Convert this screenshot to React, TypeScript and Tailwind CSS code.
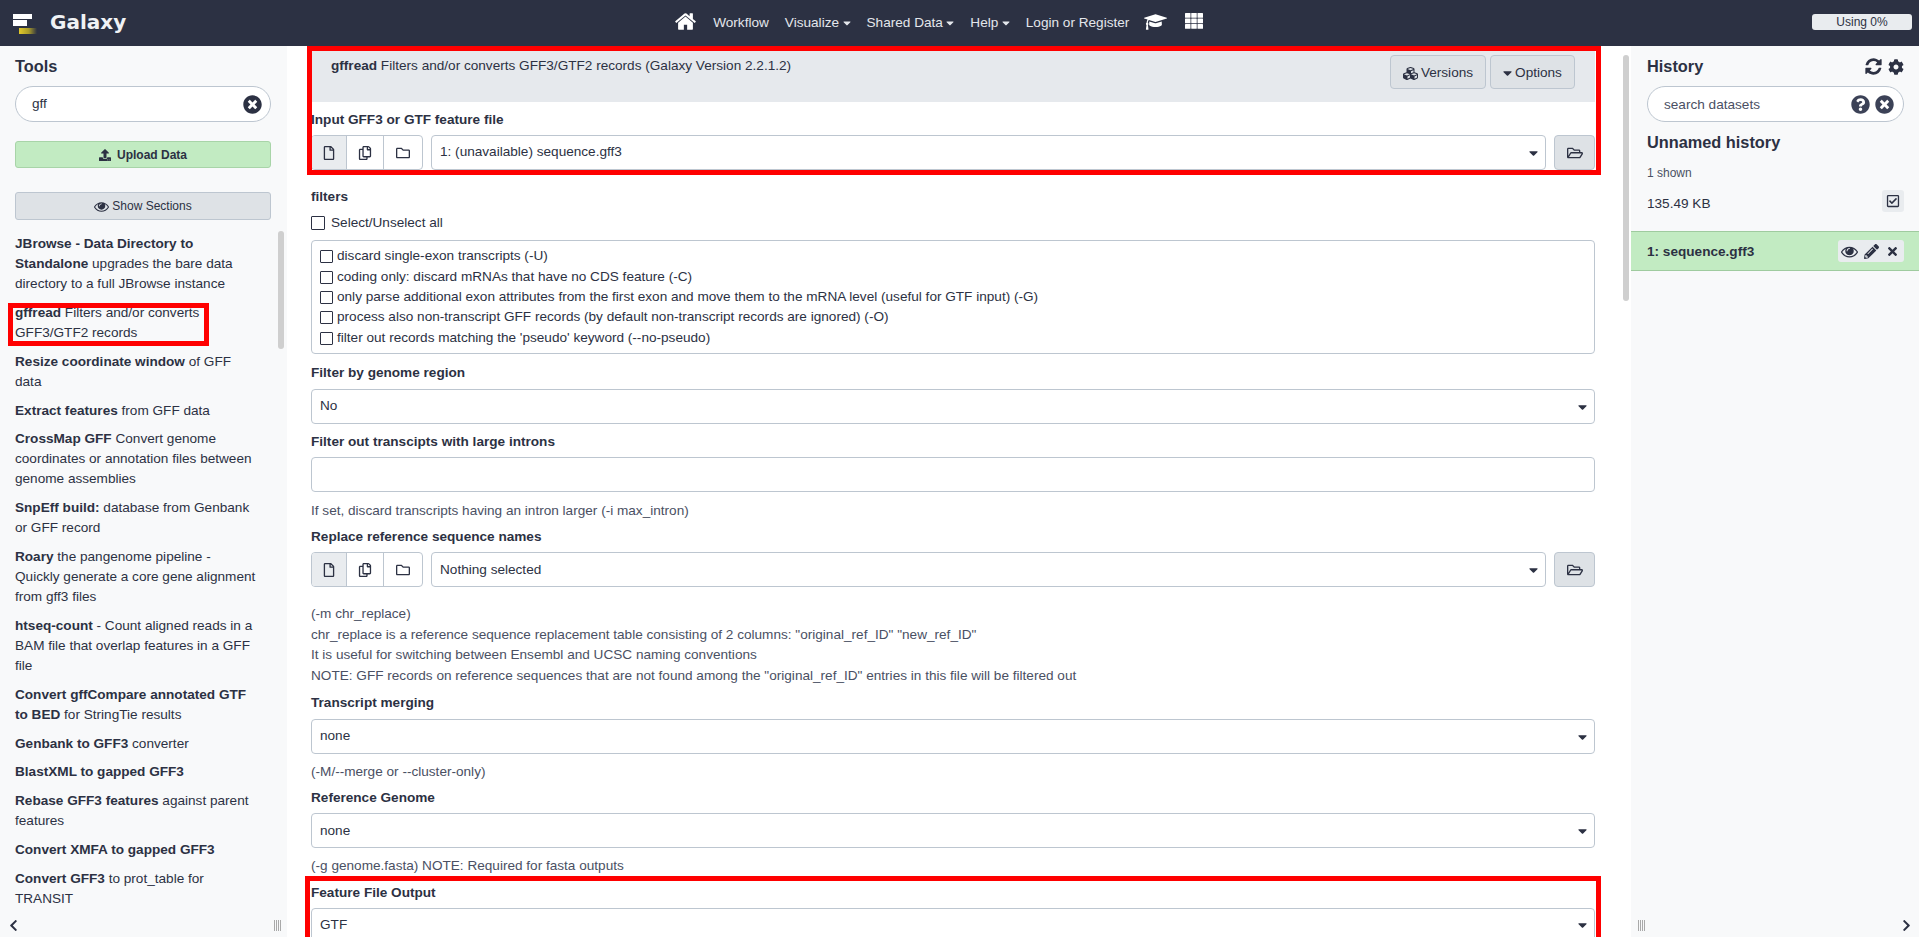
import React from "react";
import {
  FaTimesCircle, FaQuestionCircle, FaCog, FaUpload,
  FaRegFile, FaRegCopy, FaRegFolder, FaRegFolderOpen, FaCubes, FaCaretDown, FaPencilAlt, FaTimes,
  FaRegCheckSquare, FaChevronLeft, FaChevronRight,
} from "react-icons/fa";

const font = "font-['Liberation_Sans',Arial,sans-serif]";

function HomeIcon({ className }: { className: string }) {
  return (
    <svg viewBox="0 0 1792 1792" fill="currentColor" className={className}>
      <path d="M1472 992v480q0 26-19 45t-45 19h-384v-384h-256v384h-384q-26 0-45-19t-19-45v-480q0-1 .5-3t.5-3l575-474 575 474q1 2 1 6zm223-69l-62 74q-8 9-21 11h-3q-13 0-21-7l-692-577-692 577q-12 8-24 7-13-2-21-11l-62-74q-8-10-7-23.5t11-21.5l719-599q32-26 76-26t76 26l244 204v-195q0-14 9-23t23-9h192q14 0 23 9t9 23v408l219 182q10 8 11 21.5t-7 23.5z" />
    </svg>
  );
}

function CapIcon({ className }: { className: string }) {
  return (
    <svg viewBox="0 0 2304 1792" fill="currentColor" className={className}>
      <path d="M1774 836l18 316q4 69-82 128t-235 93.5-323 34.5-323-34.5-235-93.5-82-128l18-316 574 181q22 7 48 7t48-7zm530-324q0 23-22 31l-1120 352q-4 1-10 1t-10-1l-652-206q-43 34-71 111.5t-34 178.5q63 36 63 109 0 69-58 107l58 433q2 14-8 25-9 11-24 11h-192q-15 0-24-11-10-11-8-25l58-433q-58-38-58-107 0-73 65-111 11-207 98-330l-333-104q-22-8-22-31t22-31l1120-352q4-1 10-1t10 1l1120 352q22 8 22 31z" />
    </svg>
  );
}

function GridIcon({ className }: { className: string }) {
  return (
    <svg viewBox="0 0 18 16" fill="currentColor" className={className}>
      {[0, 5.5, 11].map((y) =>
        [0, 6.25, 12.5].map((x) => <rect key={`${x}-${y}`} x={x} y={y} width="5.5" height="4.8" rx="0.5" />)
      )}
    </svg>
  );
}

function RefreshIcon({ className }: { className: string }) {
  return (
    <svg viewBox="0 0 1792 1792" fill="currentColor" className={className}>
      <path d="M1639 1056q0 5-1 7-64 268-268 434.5t-478 166.5q-146 0-282.5-55t-243.5-157l-129 129q-19 19-45 19t-45-19-19-45v-448q0-26 19-45t45-19h448q26 0 45 19t19 45-19 45l-137 137q71 66 161 102t187 36q134 0 250-65t186-179q11-17 53-117 8-23 30-23h192q13 0 22.5 9.5t9.5 22.5zm25-800v448q0 26-19 45t-45 19h-448q-26 0-45-19t-19-45 19-45l138-138q-148-137-349-137-134 0-250 65t-186 179q-11 17-53 117-8 23-30 23h-199q-13 0-22.5-9.5t-9.5-22.5v-7q65-268 270-434.5t480-166.5q146 0 284 55.5t245 156.5l130-129q19-19 45-19t45 19 19 45z" />
    </svg>
  );
}

function EyeIcon({ className }: { className: string }) {
  return (
    <svg viewBox="0 0 1792 1792" fill="currentColor" className={className}>
      <path d="M1664 960q-152-236-381-353 61 104 61 225 0 185-131.5 316.5t-316.5 131.5-316.5-131.5-131.5-316.5q0-121 61-225-229 117-381 353 133 205 333.5 326.5t434.5 121.5 434.5-121.5 333.5-326.5zm-720-384q0-20-14-34t-34-14q-125 0-214.5 89.5t-89.5 214.5q0 20 14 34t34 14 34-14 14-34q0-86 61-147t147-61q20 0 34-14t14-34zm848 384q0 34-20 69-140 230-376.5 368.5t-499.5 138.5-499.5-139-376.5-368q-20-35-20-69t20-69q140-229 376.5-368t499.5-139 499.5 139 376.5 368q20 35 20 69z" />
    </svg>
  );
}

function NavItem({ children, caret, className }: { children: React.ReactNode; caret?: boolean; className: string }) {
  return (
    <span className={`flex items-center text-[13.6px] text-[#e4e7ec] whitespace-nowrap ${className}`}>
      {children}
      {caret && <FaCaretDown className="w-[8px] h-[12px] ml-[3.5px]" />}
    </span>
  );
}

function Tool({ b, t }: { b?: string; t?: string }) {
  return (
    <div className="mb-[8.85px] leading-[20px] text-[13.6px] text-[#2c3143]">
      {b && <b className="font-bold">{b}</b>}
      {t}
    </div>
  );
}

function Label({ children, className = "" }: { children: React.ReactNode; className?: string }) {
  return <div className={`text-[13.6px] font-bold leading-[20px] text-[#2c3143] ${className}`}>{children}</div>;
}

function Help({ children, className = "" }: { children: React.ReactNode; className?: string }) {
  return <div className={`text-[13.6px] leading-[20.4px] text-[#4a5063] ${className}`}>{children}</div>;
}

function Select({ value, className = "" }: { value: string; className?: string }) {
  return (
    <div className={`flex items-center justify-between h-[35px] border border-[#bdc6d0] rounded-[4px] bg-white pl-[8px] pr-[7px] text-[13.6px] text-[#2c3143] ${className}`}>
      <span>{value}</span>
      <FaCaretDown className="w-[9px] h-[14px] text-[#2c3143]" />
    </div>
  );
}

function FileSelect({ value }: { value: string }) {
  return (
    <div className="flex h-[35px]">
      <div className="flex w-[112px] h-full border border-[#bdc6d0] rounded-[4px] overflow-hidden text-[#2c3143]">
        <div className="w-[35px] flex items-center justify-center bg-[#e9ecef] border-r border-[#bdc6d0]"><FaRegFile className="text-[14px]" /></div>
        <div className="w-[37px] flex items-center justify-center border-r border-[#bdc6d0]"><FaRegCopy className="text-[14px]" /></div>
        <div className="flex-1 flex items-center justify-center"><FaRegFolder className="text-[14px]" /></div>
      </div>
      <Select value={value} className="flex-1 ml-[8px]" />
      <div className="w-[41px] ml-[8px] flex items-center justify-center bg-[#dee2e6] border border-[#bdc6d0] rounded-[4px] text-[#2c3143]">
        <FaRegFolderOpen className="text-[16px]" />
      </div>
    </div>
  );
}

function Check({ className = "" }: { className?: string }) {
  return <span className={`inline-block border-[1.5px] border-[#2c3143] rounded-[1px] bg-white shrink-0 ${className}`} />;
}

function FilterRow({ text, className = "" }: { text: string; className?: string }) {
  return (
    <div className={`flex items-center h-[20px] text-[13.6px] text-[#2c3143] ${className}`}>
      <Check className="w-[13px] h-[13px] mr-[4px]" />
      <span>{text}</span>
    </div>
  );
}

function Grip() {
  return (
    <span className="flex gap-[1px] h-[11px]">
      <i className="w-[1px] bg-[#a9a9a9]" />
      <i className="w-[1px] bg-[#a9a9a9]" />
      <i className="w-[1px] bg-[#a9a9a9]" />
      <i className="w-[1px] bg-[#a9a9a9]" />
    </span>
  );
}

function Red({ className }: { className: string }) {
  return <div className={`absolute border-[5px] border-[#ff0000] pointer-events-none ${className}`} />;
}

export default function App() {
  return (
    <div className={`${font} relative h-[937px] w-full overflow-hidden flex flex-col bg-white`}>
      <header className="h-[46px] shrink-0 bg-[#2c3143] flex items-center">
        <svg width="26" height="22" viewBox="0 0 26 22" className="ml-[12px] mt-[1px] shrink-0">
          <defs>
            <linearGradient id="gy" x1="0" x2="1">
              <stop offset="0" stopColor="#e2c92a" />
              <stop offset="0.55" stopColor="#a89a2a" />
              <stop offset="1" stopColor="#2c3143" />
            </linearGradient>
          </defs>
          <rect x="1" y="1" width="19" height="5" fill="#fff" />
          <rect x="1" y="7" width="14" height="6" fill="#fff" />
          <rect x="7" y="15" width="18" height="6" fill="url(#gy)" />
        </svg>
        <span className="ml-[12px] font-['DejaVu_Sans',sans-serif] text-[20px] font-bold text-[#f0f2f5] mb-[3px]">Galaxy</span>
        <HomeIcon className="ml-[548px] w-[23px] h-[23px] mb-[4px] text-white" />
        <NavItem className="ml-[16px]">Workflow</NavItem>
        <NavItem caret className="ml-[16px]">Visualize</NavItem>
        <NavItem caret className="ml-[16px]">Shared Data</NavItem>
        <NavItem caret className="ml-[16px]">Help</NavItem>
        <NavItem className="ml-[16px]">Login or Register</NavItem>
        <CapIcon className="ml-[15px] w-[23px] h-[18px] mb-[3px] text-white" />
        <GridIcon className="ml-[18px] w-[18px] h-[16px] mb-[4px] text-white" />
        <div className="ml-auto mr-[7px] mb-[2px] w-[100px] h-[16px] rounded-[3px] bg-[#e9ecef] text-center text-[12px] leading-[16px] text-[#2c3143]">Using 0%</div>
      </header>

      <div className="flex flex-1 min-h-0">
        <aside className="relative w-[287px] shrink-0 bg-[#f8f9fa] pl-[15px] overflow-hidden">
          <div className="text-[16.32px] font-bold leading-[21px] mt-[10px] text-[#2c3143]">Tools</div>
          <div className="mt-[9px] w-[256px] h-[36px] rounded-[18px] border border-[#bdc6d0] bg-white flex items-center justify-between pl-[16px] pr-[8px] text-[13.6px] text-[#2c3143]">
            <span>gff</span>
            <FaTimesCircle className="text-[19px]" />
          </div>
          <div className="mt-[19px] w-[256px] h-[27px] rounded-[3px] border border-[#a8d4a8] bg-[#c2ebc2] flex items-center justify-center text-[12px] font-bold text-[#2c3143]">
            <FaUpload className="text-[12px] mr-[6px]" />Upload Data
          </div>
          <div className="mt-[24px] w-[256px] h-[28px] rounded-[3px] border border-[#bdc6d0] bg-[#dee2e6] flex items-center justify-center text-[12px] text-[#2c3143]">
            <EyeIcon className="w-[15px] h-[15px] mr-[3px]" />Show Sections
          </div>
          <div className="mt-[14px] w-[243px]">
            <Tool b="JBrowse - Data Directory to Standalone" t=" upgrades the bare data directory to a full JBrowse instance" />
            <Tool b="gffread" t=" Filters and/or converts GFF3/GTF2 records" />
            <Tool b="Resize coordinate window" t=" of GFF data" />
            <Tool b="Extract features" t=" from GFF data" />
            <Tool b="CrossMap GFF" t=" Convert genome coordinates or annotation files between genome assemblies" />
            <Tool b="SnpEff build:" t=" database from Genbank or GFF record" />
            <Tool b="Roary" t=" the pangenome pipeline - Quickly generate a core gene alignment from gff3 files" />
            <Tool b="htseq-count" t=" - Count aligned reads in a BAM file that overlap features in a GFF file" />
            <Tool b="Convert gffCompare annotated GTF to BED" t=" for StringTie results" />
            <Tool b="Genbank to GFF3" t=" converter" />
            <Tool b="BlastXML to gapped GFF3" />
            <Tool b="Rebase GFF3 features" t=" against parent features" />
            <Tool b="Convert XMFA to gapped GFF3" />
            <Tool b="Convert GFF3" t=" to prot_table for TRANSIT" />
          </div>
          <div className="absolute left-0 right-0 bottom-0 h-[25px] pt-[2px] bg-[#f8f9fa] flex items-center justify-between pl-[7px] pr-[6px] text-[#2c3143]">
            <FaChevronLeft className="text-[13px]" />
            <Grip />
          </div>
          <div className="absolute left-[278px] top-[185px] w-[6px] h-[118px] rounded-[3px] bg-[#cfcfcf]" />
        </aside>

        <main className="relative w-[1344px] shrink-0 pl-[24px] pr-[36px] overflow-hidden">
          <div className="h-[56px] bg-[#e6e9ed] flex justify-between pl-[20px] pr-[20px]">
            <div className="text-[13.6px] text-[#2c3143] mt-[10px] leading-[20px]"><b>gffread</b> Filters and/or converts GFF3/GTF2 records (Galaxy Version 2.2.1.2)</div>
            <div className="flex gap-[4px] mt-[9px] h-[34px]">
              <div className="w-[96px] pt-[2px] flex items-center justify-center bg-[#dee2e6] border border-[#bdc6d0] rounded-[4px] text-[13.6px] text-[#2c3143]"><FaCubes className="text-[15px] mr-[3px]" />Versions</div>
              <div className="w-[85px] pt-[2px] flex items-center justify-center bg-[#dee2e6] border border-[#bdc6d0] rounded-[4px] text-[13.6px] text-[#2c3143]"><FaCaretDown className="w-[9px] h-[14px] mr-[3px]" />Options</div>
            </div>
          </div>
          <Label className="mt-[8px]">Input GFF3 or GTF feature file</Label>
          <div className="mt-[5px]"><FileSelect value="1: (unavailable) sequence.gff3" /></div>
          <Label className="mt-[17px]">filters</Label>
          <div className="flex items-center mt-[6px] h-[20px] text-[13.6px] text-[#2c3143]">
            <Check className="w-[14px] h-[14px] mr-[6px]" />Select/Unselect all
          </div>
          <div className="mt-[7px] h-[114px] border border-[#bdc6d0] rounded-[4px] pl-[8px] pt-[5px] flex flex-col">
            <FilterRow text="discard single-exon transcripts (-U)" />
            <FilterRow text="coding only: discard mRNAs that have no CDS feature (-C)" className="mt-[1px]" />
            <FilterRow text="only parse additional exon attributes from the first exon and move them to the mRNA level (useful for GTF input) (-G)" />
            <FilterRow text="process also non-transcript GFF records (by default non-transcript records are ignored) (-O)" />
            <FilterRow text="filter out records matching the 'pseudo' keyword (--no-pseudo)" className="mt-[1px]" />
          </div>
          <Label className="mt-[9px]">Filter by genome region</Label>
          <Select value="No" className="mt-[6px]" />
          <Label className="mt-[8px]">Filter out transcipts with large introns</Label>
          <div className="mt-[5px] h-[35px] border border-[#bdc6d0] rounded-[4px] bg-white" />
          <Help className="mt-[9px]">If set, discard transcripts having an intron larger (-i max_intron)</Help>
          <Label className="mt-[6px]">Replace reference sequence names</Label>
          <div className="mt-[5px]"><FileSelect value="Nothing selected" /></div>
          <div className="mt-[17px]">
            <Help>(-m chr_replace)</Help>
            <Help>chr_replace is a reference sequence replacement table consisting of 2 columns: "original_ref_ID" "new_ref_ID"</Help>
            <Help>It is useful for switching between Ensembl and UCSC naming conventions</Help>
            <Help>NOTE: GFF records on reference sequences that are not found among the "original_ref_ID" entries in this file will be filtered out</Help>
          </div>
          <Label className="mt-[7px]">Transcript merging</Label>
          <Select value="none" className="mt-[6px]" />
          <Help className="mt-[8px]">(-M/--merge or --cluster-only)</Help>
          <Label className="mt-[6px]">Reference Genome</Label>
          <Select value="none" className="mt-[5px]" />
          <Help className="mt-[8px]">(-g genome.fasta) NOTE: Required for fasta outputs</Help>
          <Label className="mt-[6px]">Feature File Output</Label>
          <Select value="GTF" className="mt-[5px]" />
          <div className="absolute left-[1336px] top-[9px] w-[6px] h-[246px] rounded-[3px] bg-[#cfcfcf]" />
        </main>

        <aside className="relative flex-1 bg-[#f8f9fa] overflow-hidden">
          <div className="pl-[16px] pr-[15px]">
            <div className="flex items-center justify-between mt-[10px] h-[21px] text-[#2c3143]">
              <span className="text-[16.32px] font-bold">History</span>
              <span className="flex items-center gap-[5px]"><RefreshIcon className="w-[19px] h-[19px]" /><FaCog className="text-[16px]" /></span>
            </div>
            <div className="mt-[9px] h-[36px] rounded-[18px] border border-[#bdc6d0] bg-white flex items-center pl-[16px] pr-[9px] text-[13.6px] text-[#4a5063]">
              <span className="flex-1 mt-[2px]">search datasets</span>
              <FaQuestionCircle className="text-[19px] text-[#3c4257] mr-[5px]" />
              <FaTimesCircle className="text-[19px] text-[#3c4257]" />
            </div>
            <div className="mt-[10px] text-[16.32px] font-bold leading-[20px] text-[#2c3143]">Unnamed history</div>
            <div className="mt-[11px] text-[12px] leading-[20px] text-[#4a5063]">1 shown</div>
            <div className="flex items-center justify-between mt-[6px] h-[24px] text-[13.6px] text-[#2c3143]">
              <span className="mt-[6px]">135.49 KB</span>
              <span className="w-[22px] h-[22px] bg-[#e9ecef] rounded-[3px] flex items-center justify-center"><FaRegCheckSquare className="text-[14px]" /></span>
            </div>
          </div>
          <div className="mt-[18px] h-[40px] bg-[#c2ebc2] border-y border-[#9fcb9f] flex items-center justify-between pl-[16px] pr-[15px] text-[13.6px] font-bold text-[#2c3143]">
            <span className="mt-[2px]">1: sequence.gff3</span>
            <span className="w-[66px] h-[22px] bg-[#e9ecef] rounded-[3px] flex items-center pl-[3px]"><EyeIcon className="w-[17px] h-[17px]" /><FaPencilAlt className="text-[15px] ml-[6px]" /><FaTimes className="text-[13px] ml-[7px]" /></span>
          </div>
          <div className="absolute left-0 right-0 bottom-0 h-[25px] pt-[2px] flex items-center justify-between pl-[7px] pr-[6px] text-[#2c3143]">
            <Grip />
            <FaChevronRight className="text-[13px]" />
          </div>
        </aside>
      </div>

      <Red className="left-[307px] top-[46px] w-[1294px] h-[129px]" />
      <Red className="left-[8px] top-[303px] w-[201px] h-[43px]" />
      <Red className="left-[305px] top-[876px] w-[1296px] h-[70px]" />
    </div>
  );
}
